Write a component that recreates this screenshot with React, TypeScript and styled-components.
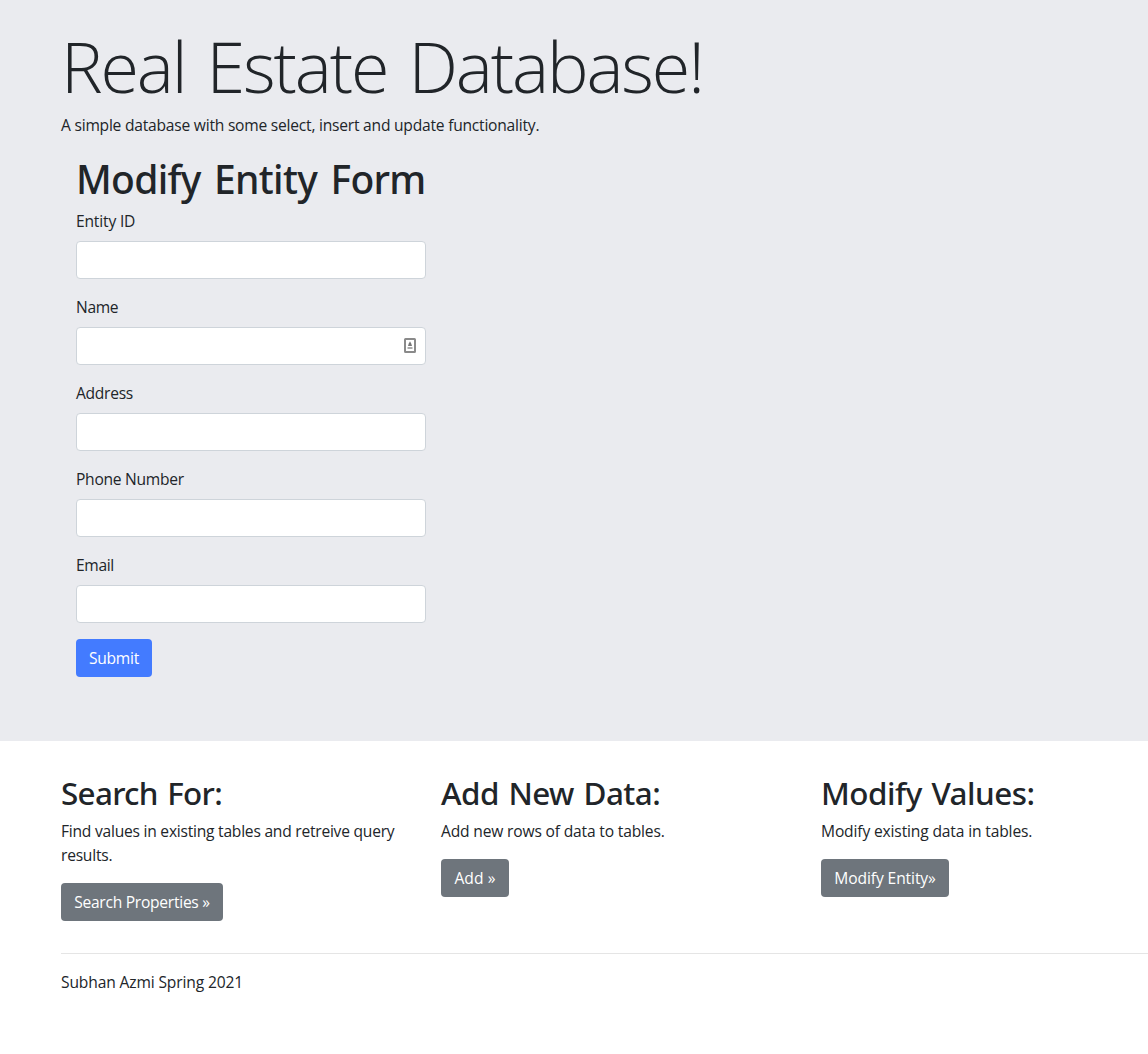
import React from "react";
import styled, { createGlobalStyle } from "styled-components";

const Global = createGlobalStyle`
  *, *::before, *::after { box-sizing: border-box; }
  html { overflow: hidden; }
  body { margin: 0; background: #fff; color: #212529; font: 400 15.6px/24px "Open Sans", "Noto Sans", sans-serif; }
`;
const Fit = styled.span<{ $ls?: number }>`
  letter-spacing: ${(p) => p.$ls ?? 0}px;
  white-space: nowrap;
`;
const Jumbotron = styled.header`
  height: 741px;
  padding: 30px 0 64px;
  background: #eaebef;
`;
const Container = styled.div`
  width: 1140px;
  margin-left: 46px;
  padding: 0 15px;
`;
const Title = styled.h1`
  margin: 0 0 11px;
  font: 300 70px/72px "Open Sans", sans-serif;
  word-spacing: 5px;
`;
const Text = styled.p`
  margin: 0 0 16px;
`;
const Form = styled.form`
  width: 380px;
  padding: 2px 15px 0;
`;
const FormTitle = styled.h2`
  margin: 0 0 6px;
  font: 500 39px/48px "Noto Sans", sans-serif;
  word-spacing: 4px;
`;
const Group = styled.div`
  margin-bottom: 16px;
`;
const Label = styled.label`
  display: block;
  margin-bottom: 8px;
`;
const Field = styled.div`
  display: flex;
  align-items: center;
  width: 350px;
  height: 38px;
  padding-right: 9px;
  border: 1px solid #ced4da;
  border-radius: 4px;
  background: #fff;
`;
const Input = styled.input`
  flex: 1;
  min-width: 0;
  height: 100%;
  padding: 0 12px;
  border: 0;
  outline: 0;
  background: transparent;
  font: inherit;
`;
const Button = styled.button<{ $w: number; $primary?: boolean }>`
  display: block;
  width: ${(p) => p.$w}px;
  height: 38px;
  padding: 0;
  border: 0;
  border-radius: 4px;
  background: ${(p) => (p.$primary ? "#437bff" : "#6e757c")};
  color: #fff;
  font: inherit;
  text-align: center;
`;
const Columns = styled.main`
  display: grid;
  grid-template-columns: repeat(3, 350px);
  column-gap: 30px;
  padding-top: 32px;
`;
const Heading = styled.h2`
  margin: 0 0 6px;
  font: 500 31.4px/40px "Noto Sans", sans-serif;
  word-spacing: 2px;
`;
const Rule = styled.hr`
  margin: 32px 0 16px;
  border: 0;
  border-top: 1px solid #e5e5e5;
`;

const ContactIcon = () => (
  <svg width="12" height="16" viewBox="0 0 12 16" fill="none">
    <rect x="1" y="1" width="10" height="13" rx=".5" stroke="#8a8a8a" strokeWidth="2" />
    <path d="M6 3.200L7.200 5.500 8 8H4l.8-2.500z" fill="#777" />
    <path d="M3.500 9h5v2h-5z" fill="#aaa" />
  </svg>
);

const fields = [
  { label: "Entity ID", ls: -0.18 },
  { label: "Name", ls: -0.35, icon: true },
  { label: "Address", ls: -0.28 },
  { label: "Phone Number", ls: -0.28 },
  { label: "Email", ls: -0.35 },
];
const cards = [
  { title: "Search For:", hls: -0.7, lines: ["Find values in existing tables and retreive query", "results."], ls: -0.235, button: "Search Properties »", bls: -0.27, w: 162 },
  { title: "Add New Data:", hls: -0.55, lines: ["Add new rows of data to tables."], ls: -0.17, button: "Add »", bls: 0.1, w: 68 },
  { title: "Modify Values:", hls: -0.5, lines: ["Modify existing data in tables."], ls: -0.15, button: "Modify Entity»", bls: -0.1, w: 128 },
];

export default function App() {
  return (
    <>
      <Global />
      <Jumbotron>
        <Container>
          <Title><Fit $ls={-2.13}>Real Estate Database!</Fit></Title>
          <Text><Fit $ls={-0.225}>A simple database with some select, insert and update functionality.</Fit></Text>
          <Form>
            <FormTitle><Fit $ls={-0.7}>Modify Entity Form</Fit></FormTitle>
            {fields.map((f) => (
              <Group key={f.label}>
                <Label><Fit $ls={f.ls}>{f.label}</Fit></Label>
                <Field><Input aria-label={f.label} />{f.icon && <ContactIcon />}</Field>
              </Group>
            ))}
            <Button type="button" $w={76} $primary><Fit $ls={-0.27}>Submit</Fit></Button>
          </Form>
        </Container>
      </Jumbotron>
      <Container>
        <Columns>
          {cards.map((c) => (
            <section key={c.title}>
              <Heading><Fit $ls={c.hls}>{c.title}</Fit></Heading>
              <Text>{c.lines.map((l) => <React.Fragment key={l}><Fit $ls={c.ls}>{l}</Fit><br /></React.Fragment>)}</Text>
              <Button type="button" $w={c.w}><Fit $ls={c.bls}>{c.button}</Fit></Button>
            </section>
          ))}
        </Columns>
        <Rule />
        <Text><Fit $ls={-0.14}>Subhan Azmi Spring 2021</Fit></Text>
      </Container>
    </>
  );
}
